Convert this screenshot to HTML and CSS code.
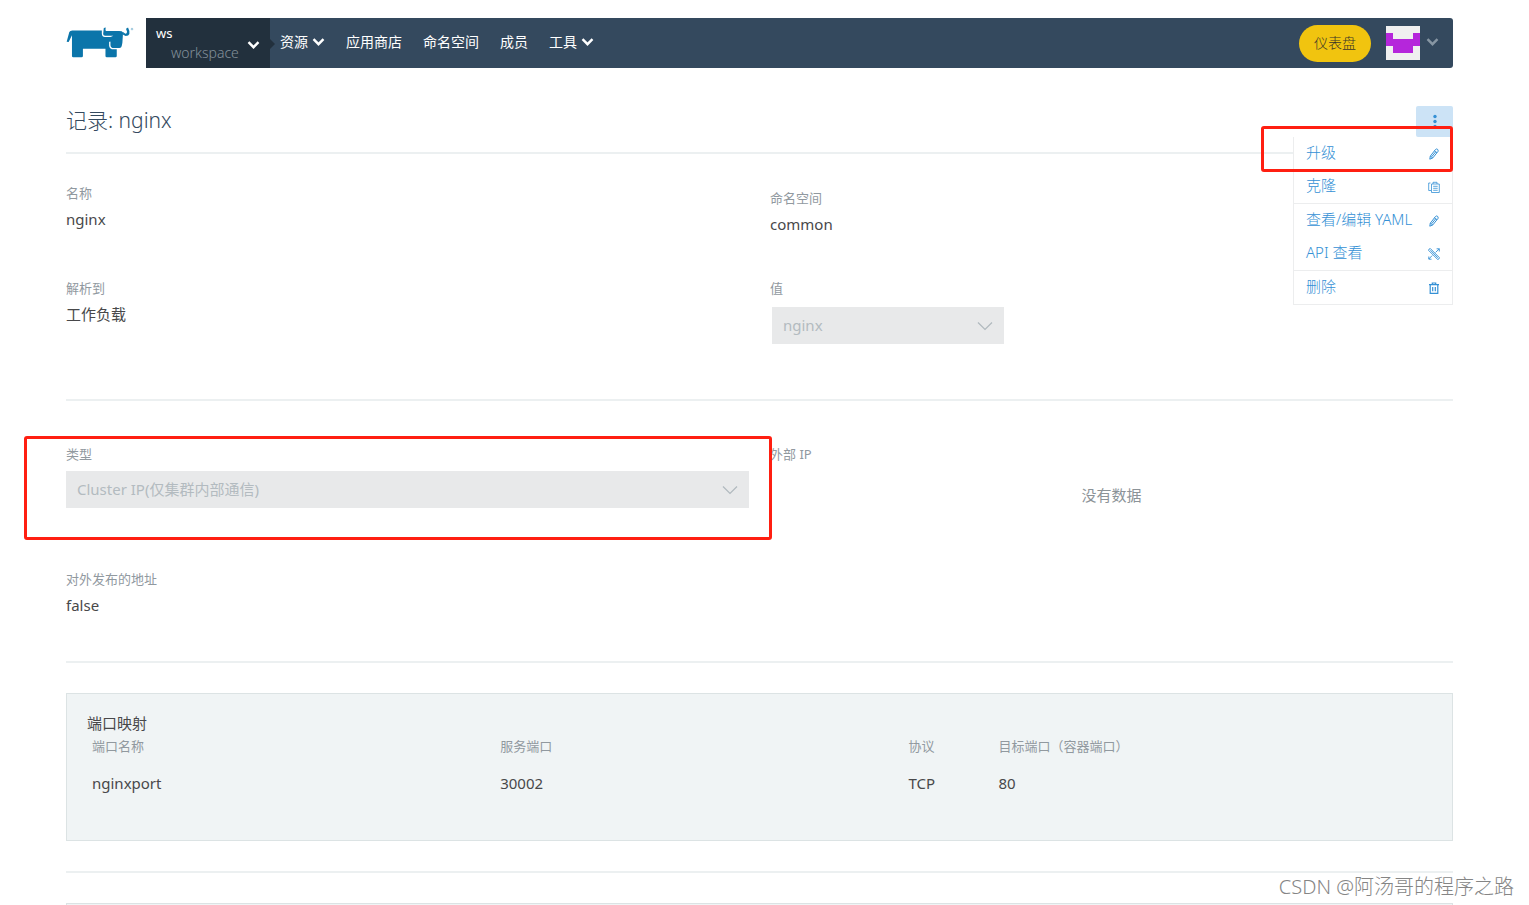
FILE: index.html
```html
<!DOCTYPE html>
<html lang="zh-CN">
<head>
<meta charset="utf-8">
<meta name="viewport" content="width=device-width, initial-scale=1">
<title>记录: nginx</title>
<link rel="stylesheet" href="styles.css">
</head>
<body>
<svg class="sprite" aria-hidden="true">
  <symbol id="chevron" viewBox="0 0 12 8"><path d="M1 1.2 6 6.2 11 1.2" fill="none" stroke="currentColor" stroke-width="2.4"/></symbol>
  <symbol id="chevron-thin" viewBox="0 0 16 10"><path d="M1 1.5 8 8.5 15 1.5" fill="none" stroke="currentColor" stroke-width="1.2"/></symbol>
  <symbol id="pencil" viewBox="0 0 12 12"><path d="M1.8 11.2 2.3 8.2 7.4 1.6Q8.4.5 9.4 1.2T10.1 3.3L4.8 9.9ZM2.3 8.2 4.8 9.9M6.4 2.9 8.9 4.7M3.7 8.7 7.8 3.7" fill="none" stroke="currentColor" stroke-width="1"/></symbol>
</svg>
<div class="page">
  <header class="header">
    <a class="logo" href="#" aria-label="Rancher">
      <svg viewBox="30 50 205 96" aria-hidden="true">
        <path fill="#0b75aa" d="M32 97 40 68Q42 63 49 63H138V74Q139 83 147 83H164L180 76V92L163 97H160V110Q161 118 168 120H183V140Q183 144 179 144H153Q149 144 149 140V118H81V140Q81 144 77 144H52Q48 144 48 140V78L38 98Z"/>
        <path fill="#0b75aa" d="M144 56 150 54Q147 65 153 65H190Q200 65 202 69L200 100L198 110Q197 116 191 116H170Q164 115 164 108V90H172V79H148Q142 79 142 74Z"/>
        <path fill="#0b75aa" d="M202 76V68L209 73Q214 73 214 67L211 58 217 54Q223 65 221 74Q219 80 210 80Z"/>
        <circle cx="229" cy="59" r="2.5" fill="none" stroke="#65a8c8" stroke-width="2"/>
      </svg>
    </a>
    <nav class="nav">
      <button class="scope" type="button">
        <span class="scope-text"><span class="scope-cluster">ws</span><span class="scope-project">workspace</span></span>
        <svg class="chevron"><use href="#chevron"/></svg>
      </button>
      <div class="links">
        <button class="link" type="button">资源 <svg class="chevron"><use href="#chevron"/></svg></button>
        <a class="link" href="#">应用商店</a>
        <a class="link" href="#">命名空间</a>
        <a class="link" href="#">成员</a>
        <button class="link" type="button">工具 <svg class="chevron"><use href="#chevron"/></svg></button>
      </div>
      <div class="account">
        <a class="dashboard" href="#">仪表盘</a>
        <button class="user" type="button" aria-label="用户">
          <svg class="avatar" viewBox="0 0 34 34"><path fill="#f0f0f0" d="M0 0h34v34H0z"/><path fill="#b526db" d="M0 7h7v6h20V7h7v13h-7v7H7v-7H0z"/></svg>
          <svg class="chevron muted"><use href="#chevron"/></svg>
        </button>
      </div>
    </nav>
  </header>

  <main class="main">
    <div class="title-row">
      <h1 class="title">记录: nginx</h1>
      <div class="actions">
        <button class="more" type="button" aria-label="操作">
          <svg viewBox="0 0 4 16"><circle cx="2" cy="2.5" r="1.7"/><circle cx="2" cy="7.5" r="1.7"/><circle cx="2" cy="12.5" r="1.7"/></svg>
        </button>
        <ul class="menu">
          <li><a href="#">升级 <svg class="icon"><use href="#pencil"/></svg></a></li>
          <li><a href="#">克隆
            <svg class="icon" viewBox="0 0 12 12"><path d="M3 9.5H.7V2H2.5M3.5 3H11.3V11.5H3.5ZM5 3V1.3H9V3M5.2 5.3H9.7M5.2 7.3H9.7M5.2 9.3H9.7" fill="none" stroke="currentColor" stroke-width=".8"/></svg></a></li>
          <li class="divided"><a href="#">查看/编辑 YAML <svg class="icon"><use href="#pencil"/></svg></a></li>
          <li><a href="#">API 查看
            <svg class="icon" viewBox="0 0 12 12"><path d="M.6 2.4Q.6.6 2.4.6L11.4 9.6Q11.4 11.4 9.6 11.4ZM2.4 2.2 9.8 9.8M.8 11 4.2 7.5M7.6 4.4 11.3.8M8.6.8H11.3V3.5M.8 8.5V11.2H3.5" fill="none" stroke="currentColor" stroke-width=".9"/></svg></a></li>
          <li class="divided"><a href="#">删除
            <svg class="icon" viewBox="0 0 12 12"><path d="M1 2.7H11M4.3 2.5V1H7.7V2.5M2.2 3V11.3H9.8V3M4.7 5V9.3M7.3 5V9.3" fill="none" stroke="currentColor" stroke-width="1.2"/></svg></a></li>
        </ul>
        <div class="highlight highlight-menu"></div>
      </div>
    </div>

    <section class="grid grid-basic">
      <div class="field"><div class="label">名称</div><div class="value">nginx</div></div>
      <div class="field field-lower"><div class="label">命名空间</div><div class="value">common</div></div>
      <div class="field"><div class="label">解析到</div><div class="value">工作负载</div></div>
      <div class="field">
        <label class="label" for="target">值</label>
        <div class="select select-short"><select id="target" disabled><option>nginx</option></select><svg><use href="#chevron-thin"/></svg></div>
      </div>
    </section>

    <section class="grid grid-type">
      <div class="field field-type">
        <label class="label" for="kind">类型</label>
        <div class="select"><select id="kind" disabled><option>Cluster IP(仅集群内部通信)</option></select><svg><use href="#chevron-thin"/></svg></div>
        <div class="highlight highlight-type"></div>
      </div>
      <div class="field"><div class="label">外部 IP</div><div class="empty">没有数据</div></div>
      <div class="field"><div class="label">对外发布的地址</div><div class="value">false</div></div>
    </section>

    <section class="ports-section">
      <div class="panel">
        <h2 class="panel-title">端口映射</h2>
        <table class="ports">
          <colgroup><col class="col-name"><col class="col-port"><col class="col-protocol"><col></colgroup>
          <thead><tr><th>端口名称</th><th>服务端口</th><th>协议</th><th>目标端口（容器端口）</th></tr></thead>
          <tbody><tr><td>nginxport</td><td>30002</td><td>TCP</td><td>80</td></tr></tbody>
        </table>
      </div>
    </section>
    <div class="panel panel-next"></div>
  </main>
</div>
<div class="watermark">CSDN @阿汤哥的程序之路</div>
</body>
</html>
```
FILE: styles.css
```css
* { box-sizing: border-box; }

body {
  margin: 0;
  background: #fff;
  color: #48484a;
  font: 400 15px/20px "Noto Sans", "Noto Sans CJK SC", sans-serif;
}

a { color: inherit; text-decoration: none; }

button {
  padding: 0;
  border: 0;
  background: none;
  color: inherit;
  font: inherit;
  cursor: pointer;
}

.sprite { position: absolute; width: 0; height: 0; }

.page {
  display: flex;
  flex-direction: column;
  min-height: 100vh;
  padding: 18px 76px 0 66px;
}

/* Header */
.header { display: flex; height: 50px; }
.logo { flex: none; width: 80px; padding-top: 8px; }
.logo svg { display: block; width: 68px; height: 32px; }

.nav {
  display: flex;
  flex: 1;
  border-radius: 0 3px 3px 0;
  background: #34495e;
  color: #fff;
  font-size: 14px;
}

.scope {
  position: relative;
  display: flex;
  align-items: center;
  width: 124px;
  padding: 0 10px;
  background: #22303d;
  text-align: left;
}
.scope::after {
  content: "";
  position: absolute;
  top: 21px;
  left: 100%;
  border: 5px solid transparent;
  border-left-color: #22303d;
}
.scope-text { display: flex; flex-direction: column; font-size: 13px; }
.scope-project { padding-left: 15px; color: #84919b; font-size: 14px; font-weight: 300; }
.scope .chevron { position: absolute; top: 23px; right: 10px; }
.chevron { width: 13px; height: 8px; }
.muted { color: #8796a3; }

.links { display: flex; align-items: center; gap: 21px; padding: 0 10px 2px; }
.link { display: flex; align-items: center; gap: 4px; }

.account { display: flex; align-items: center; gap: 15px; margin-left: auto; padding-right: 14px; }
.dashboard {
  padding: 8px 15px 9px;
  border-radius: 19px;
  background: #f1c40f;
  color: #3a3628;
  font-weight: 300;
}
.user { display: flex; align-items: center; gap: 6px; }
.user .chevron { margin-bottom: 2px; }
.avatar { width: 34px; height: 34px; }

/* Title and action menu */
.main { display: flex; flex: 1; flex-direction: column; }
.title-row {
  display: flex;
  justify-content: space-between;
  height: 86px;
  padding-top: 38px;
  border-bottom: 2px solid #ecf0f1;
}
.title { margin: 0; color: #34495e; font-size: 21px; font-weight: 300; line-height: 28px; }

.actions { position: relative; }
.more {
  display: grid;
  place-items: center;
  width: 37px;
  height: 31px;
  border-radius: 2px;
  background: #cce3f6;
}
.more svg { width: 4px; height: 16px; fill: #3490d5; }

.menu {
  position: absolute;
  z-index: 1;
  top: 31px;
  right: 0;
  width: 160px;
  margin: 0;
  padding: 0;
  border: solid #ecedee;
  border-width: 0 1px 1px;
  background: #fff;
  color: #3490d5;
  font-weight: 300;
  list-style: none;
}
.menu a {
  display: flex;
  align-items: center;
  justify-content: space-between;
  height: 33px;
  padding: 0 12px 4px;
  white-space: nowrap;
}
.divided { border-top: 1px solid #ecedee; }
.icon { flex: none; width: 12px; height: 12px; margin-top: 5px; }

.highlight {
  position: absolute;
  z-index: 2;
  border: 3px solid #ff1f11;
  border-radius: 3px;
  pointer-events: none;
}
.highlight-menu { top: 20px; right: 0; width: 192px; height: 46px; }
.highlight-type { inset: -8px -23px -32px -42px; }

/* Fields */
.grid { display: grid; grid-template-columns: 1fr 1fr; column-gap: 21px; border-bottom: 2px solid #ecf0f1; }
.grid-basic { row-gap: 44px; padding: 29px 0 55px; }
.grid-type { row-gap: 61px; padding: 43px 0 46px; }
.field-lower { padding-top: 5px; }
.field-type { position: relative; }
.label { display: block; margin-bottom: 6px; color: #91999f; font-size: 13px; }
.empty { padding-top: 15px; color: #8c9398; text-align: center; }

.select { position: relative; margin-top: 7px; }
.select-short { width: 232px; margin: 9px 0 0 2px; }
.select select {
  display: block;
  width: 100%;
  height: 37px;
  padding: 0 36px 2px 11px;
  border: 0;
  border-radius: 0;
  appearance: none;
  background: #e8e9ea;
  color: #b3bbc0;
  font: inherit;
  opacity: 1;
}
.select svg {
  position: absolute;
  top: 14px;
  right: 11px;
  width: 16px;
  height: 10px;
  color: #b0b9be;
}

/* Port mappings */
.ports-section { padding: 30px 0; border-bottom: 2px solid #ecf0f1; }
.panel { border: 1px solid #dce3e4; background: #f0f4f5; }
.ports-section .panel { padding: 19px 20px 47px; }
.panel-title { margin: 0 0 3px; font-size: 15px; font-weight: 400; line-height: 20px; }
.ports { width: 100%; border-collapse: collapse; table-layout: fixed; text-align: left; }
.ports th { padding: 0 5px; color: #91999f; font-size: 13px; font-weight: 400; }
.ports td { padding: 17px 5px 0; }
.col-name, .col-port { width: 30.35%; }
.col-protocol { width: 6.7%; }
.panel-next { flex: 1; margin-top: 30px; border-bottom: 0; }

.watermark {
  position: absolute;
  right: 15px;
  bottom: 4px;
  z-index: 3;
  color: #858585;
  font-size: 20px;
  font-weight: 300;
  line-height: 28px;
  text-shadow: 0 0 1px #fff;
}
```
